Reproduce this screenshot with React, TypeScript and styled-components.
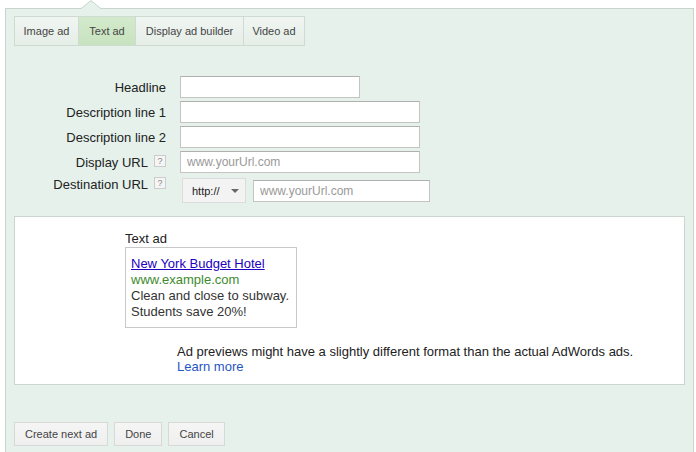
import React from 'react';
import styled, { createGlobalStyle } from 'styled-components';

const colors = {
  panel: '#e5f1ea',
  panelBorder: '#c6d6cc',
  tabBorder: '#cddbd1',
  text: '#222',
  link: '#2200c1',
  green: '#3d8a2e',
  blue: '#1f56c2',
};

const GlobalStyle = createGlobalStyle`
  body {
    margin: 0;
    background: #fff;
    font-family: "Liberation Sans", Arial, sans-serif;
    color: ${colors.text};
  }
`;

const tabs = [
  { label: 'Image ad', width: 65 },
  { label: 'Text ad', width: 58 },
  { label: 'Display ad builder', width: 109 },
  { label: 'Video ad', width: 62 },
];

const App = () => {
  return (
    <Page>
      <GlobalStyle />
      <Panel>
        <Notch width="22" height="10" viewBox="0 0 22 10">
          <polygon points="0,9.5 11,0.5 22,9.5" fill={colors.panel} stroke={colors.panelBorder} strokeWidth="1" />
          <rect x="0" y="9" width="22" height="2" fill={colors.panel} />
        </Notch>

        <TabBar>
          {tabs.map((t) => (
            <Tab key={t.label} $width={t.width} $active={t.label === 'Text ad'}>
              {t.label}
            </Tab>
          ))}
        </TabBar>

        <Form>
          <Label>Headline</Label>
          <Field>
            <Input $width={180} />
          </Field>
          <Label>Description line 1</Label>
          <Field>
            <Input $width={240} />
          </Field>
          <Label>Description line 2</Label>
          <Field>
            <Input $width={240} />
          </Field>
          <Label>
            Display URL <Help>?</Help>
          </Label>
          <Field>
            <Input $width={240} placeholder="www.yourUrl.com" />
          </Field>
          <Label $shift={-3}>
            Destination URL <Help>?</Help>
          </Label>
          <Field $tall>
            <Select>
              http://
              <Arrow width="8" height="4" viewBox="0 0 8 4">
                <polygon points="0,0 8,0 4,4" fill="#666" />
              </Arrow>
            </Select>
            <Input $width={177} placeholder="www.yourUrl.com" />
          </Field>
        </Form>

        <Preview>
          <PreviewInner>
            <PreviewTitle>Text ad</PreviewTitle>
            <AdBox>
              <AdLink href="#">New York Budget Hotel</AdLink>
              <AdUrl>www.example.com</AdUrl>
              <AdLine>Clean and close to subway.</AdLine>
              <AdLine>Students save 20%!</AdLine>
            </AdBox>
          </PreviewInner>
          <Notice>
            Ad previews might have a slightly different format than the actual AdWords ads.
            <br />
            <LearnMore href="#">Learn more</LearnMore>
          </Notice>
        </Preview>

        <Actions>
          <Button>Create next ad</Button>
          <Button>Done</Button>
          <Button>Cancel</Button>
        </Actions>
      </Panel>
    </Page>
  );
};

export default App;

const Page = styled.div`
  padding: 8px 2px 0 5px;
  height: 452px;
  box-sizing: border-box;
  overflow: hidden;
`;

const Panel = styled.div`
  position: relative;
  height: 460px;
  background: ${colors.panel};
  border: 1px solid ${colors.panelBorder};
  padding: 7px 8px 0 8px;
  box-sizing: border-box;
`;

const Notch = styled.svg`
  position: absolute;
  left: 74px;
  top: -9px;
  display: block;
`;

const TabBar = styled.div`
  display: flex;
`;

const Tab = styled.div<{ $active?: boolean; $width: number }>`
  width: ${(p) => p.$width}px;
  height: 30px;
  box-sizing: border-box;
  display: flex;
  align-items: center;
  justify-content: center;
  font-size: 11px;
  color: #444;
  border: 1px solid ${colors.tabBorder};
  margin-left: -1px;
  background: ${(p) =>
    p.$active
      ? 'linear-gradient(#d3e9cc, #c8e3bf)'
      : 'linear-gradient(#f0f5f1, #e6eee8)'};
  &:first-child {
    margin-left: 0;
  }
`;

const Form = styled.div`
  display: grid;
  grid-template-columns: 152px 1fr;
  column-gap: 14px;
  row-gap: 3px;
  margin-top: 30px;
`;

const Label = styled.div<{ $shift?: number }>`
  display: flex;
  align-items: center;
  justify-content: flex-end;
  gap: 6px;
  font-size: 13px;
  color: ${colors.text};
  height: 22px;
  margin-top: ${(p) => p.$shift ?? 0}px;
`;

const Help = styled.span`
  width: 12px;
  height: 12px;
  box-sizing: border-box;
  border: 1px solid #ccc;
  background: #f5f5f5;
  color: #888;
  font-size: 9px;
  display: inline-flex;
  align-items: center;
  justify-content: center;
  margin-top: -2px;
`;

const Field = styled.div<{ $tall?: boolean }>`
  display: flex;
  align-items: center;
  gap: 7px;
  height: ${(p) => (p.$tall ? '25px' : '22px')};
  padding-left: ${(p) => (p.$tall ? '2px' : '0')};
  margin-top: ${(p) => (p.$tall ? '2px' : '0')};
`;

const Input = styled.input<{ $width: number }>`
  width: ${(p) => p.$width}px;
  height: 22px;
  box-sizing: border-box;
  border: 1px solid #c4c4c4;
  border-top-color: #b0b0b0;
  background: #fff;
  font-family: "Liberation Sans", Arial, sans-serif;
  font-size: 12px;
  padding: 0 6px;
  outline: none;
  &::placeholder {
    color: #999;
  }
`;

const Select = styled.div`
  width: 64px;
  height: 25px;
  box-sizing: border-box;
  border: 1px solid #dcdcdc;
  background: #f3f3f3;
  font-size: 11px;
  color: #222;
  display: flex;
  align-items: center;
  justify-content: space-between;
  padding: 0 6px 0 9px;
`;

const Arrow = styled.svg`
  display: block;
`;

const Preview = styled.div`
  margin-top: 13px;
  height: 169px;
  box-sizing: border-box;
  background: #fff;
  border: 1px solid #cdd5d0;
  padding: 14px 0 0 110px;
`;

const PreviewInner = styled.div`
  display: flex;
  flex-direction: column;
`;

const PreviewTitle = styled.div`
  font-size: 13px;
  line-height: 16px;
  color: ${colors.text};
`;

const AdBox = styled.div`
  width: 172px;
  height: 81px;
  box-sizing: border-box;
  border: 1px solid #c8c8c8;
  padding: 8px 0 0 5px;
  display: flex;
  flex-direction: column;
  font-size: 13px;
  line-height: 16px;
`;

const AdLink = styled.a`
  color: ${colors.link};
  text-decoration: underline;
`;

const AdUrl = styled.span`
  color: ${colors.green};
`;

const AdLine = styled.span`
  color: #333;
`;

const Notice = styled.div`
  margin: 16px 0 0 52px;
  font-size: 13px;
  line-height: 15px;
  color: ${colors.text};
`;

const LearnMore = styled.a`
  color: ${colors.blue};
  text-decoration: none;
`;

const Actions = styled.div`
  display: flex;
  gap: 6px;
  margin-top: 37px;
`;

const Button = styled.button`
  height: 24px;
  box-sizing: border-box;
  padding: 0 10px;
  border: 1px solid #d8d8d8;
  background: linear-gradient(#f5f5f5, #efefef);
  font-family: "Liberation Sans", Arial, sans-serif;
  font-size: 11px;
  color: #444;
`;
